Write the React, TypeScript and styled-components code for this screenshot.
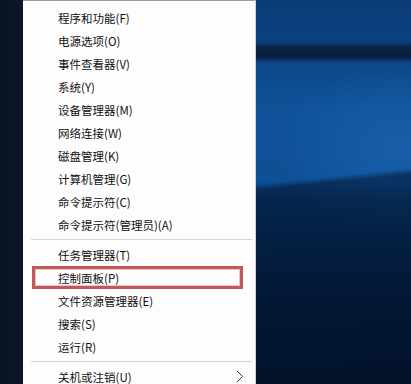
import React from 'react'
import styled, { createGlobalStyle } from 'styled-components'

type Entry = { label: string; highlight?: boolean; submenu?: boolean }

const groups: Entry[][] = [
  [
    { label: '程序和功能(F)' },
    { label: '电源选项(O)' },
    { label: '事件查看器(V)' },
    { label: '系统(Y)' },
    { label: '设备管理器(M)' },
    { label: '网络连接(W)' },
    { label: '磁盘管理(K)' },
    { label: '计算机管理(G)' },
    { label: '命令提示符(C)' },
    { label: '命令提示符(管理员)(A)' },
  ],
  [
    { label: '任务管理器(T)' },
    { label: '控制面板(P)', highlight: true },
    { label: '文件资源管理器(E)' },
    { label: '搜索(S)' },
    { label: '运行(R)' },
  ],
  [{ label: '关机或注销(U)', submenu: true }],
]

const GlobalStyle = createGlobalStyle`
  html, body {
    margin: 0;
    padding: 0;
    overflow: hidden;
    background: #031a38;
  }
`

// wallpaper: dark strip on the left, blue win10 light beams on the right
const Desktop = styled.div`
  box-sizing: border-box;
  width: 411px;
  height: 384px;
  overflow: hidden;
  display: flex;
  align-items: flex-start;
  padding-left: 23px;
  background:
    linear-gradient(to right, #08131f 0, #0a1829 23px, transparent 23px),
    linear-gradient(174deg, transparent 0, transparent 210px, rgba(2, 20, 48, 0.55) 216px, rgba(2, 16, 38, 0.75) 424px),
    radial-gradient(ellipse 120px 90px at 400px 150px, rgba(40, 120, 200, 0.35), transparent),
    linear-gradient(
      180deg,
      #0b3c77 0,
      #0c4080 42px,
      #0a2548 47px,
      #071c38 56px,
      #0c4788 63px,
      #0f5299 110px,
      #0e5096 180px,
      #0a3c76 200px,
      #072d5a 260px,
      #041e42 330px,
      #031737 384px
    );
`

const Menu = styled.ul`
  box-sizing: border-box;
  width: 233px;
  min-height: 390px;
  margin: 0;
  padding: 5px 0 0;
  list-style: none;
  background: #fdfdfd;
  border-top: 1px solid #9c9c9c;
  border-right: 1px solid #d2d2d2;
  font-family: 'Noto Sans CJK SC', 'Noto Sans', sans-serif;
  font-size: 11.5px;
  color: #111;
`

const Item = styled.li`
  position: relative;
  height: 23px;
  display: flex;
  align-items: center;
  justify-content: space-between;
  padding: 0 11px 0 35px;
  white-space: nowrap;
`

const Highlight = styled.span`
  position: absolute;
  left: 9px;
  right: 12px;
  top: 0;
  bottom: 0;
  border: 3px solid #c3585b;
  box-shadow: inset 0 0 0 1px rgba(220, 140, 140, 0.5);
  pointer-events: none;
`

const Separator = styled.li`
  height: 1px;
  margin: 3px 3px 3px 8px;
  background: #d4d4d4;
`

const Chevron = () => (
  <svg width="8" height="13" viewBox="0 0 8 13">
    <path d="M1 1l5.5 5.5L1 12" fill="none" stroke="#333" strokeWidth="1" />
  </svg>
)

export default function App() {
  return (
    <>
      <GlobalStyle />
      <Desktop>
        <Menu>
          {groups.map((group, gi) => (
            <React.Fragment key={gi}>
              {gi > 0 && <Separator />}
              {group.map(entry => (
                <Item key={entry.label}>
                  <span>{entry.label}</span>
                  {entry.submenu && <Chevron />}
                  {entry.highlight && <Highlight />}
                </Item>
              ))}
            </React.Fragment>
          ))}
        </Menu>
      </Desktop>
    </>
  )
}
